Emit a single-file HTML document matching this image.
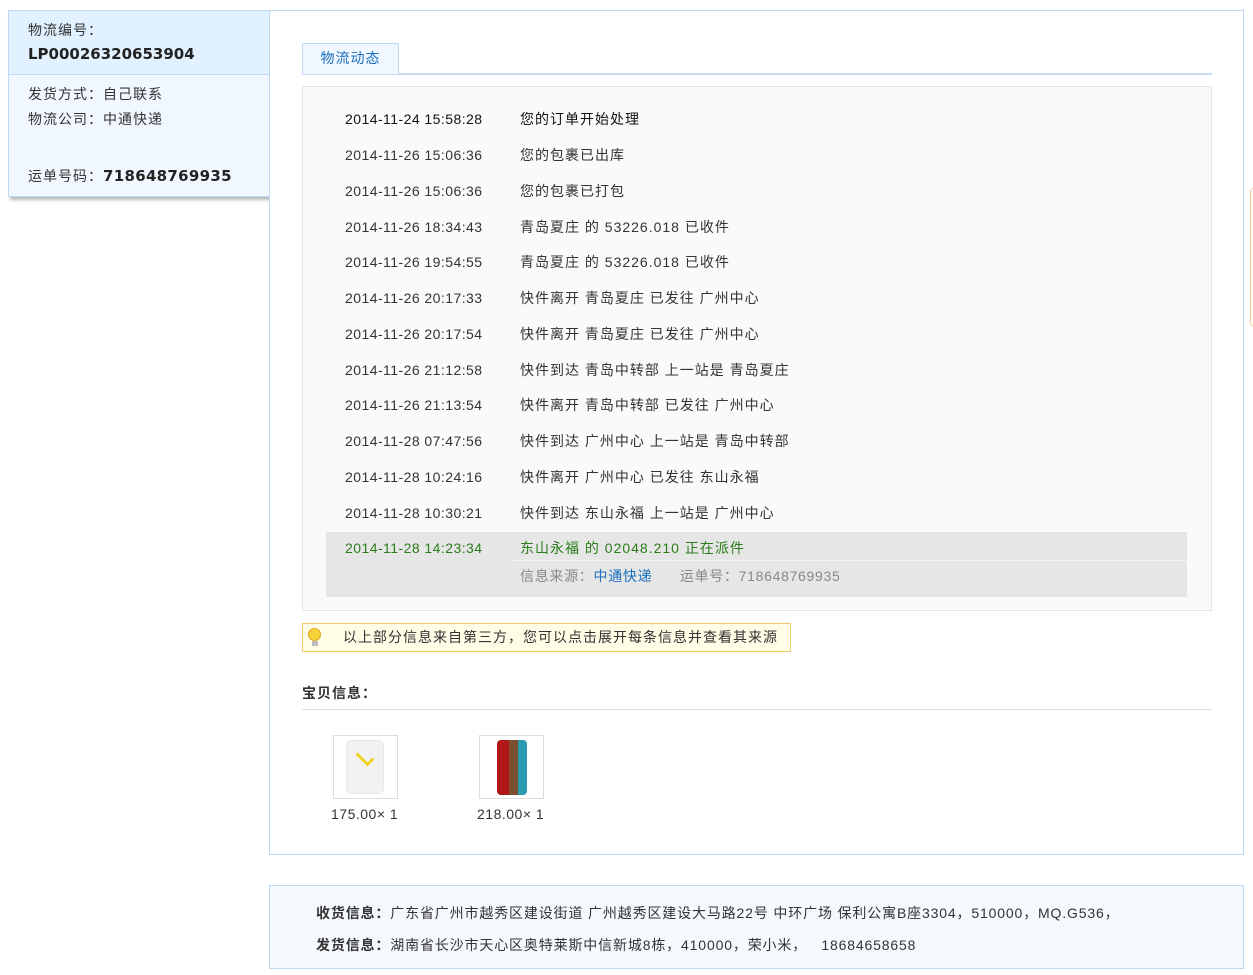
<!DOCTYPE html>
<html><head><meta charset="utf-8"><style>
*{margin:0;padding:0;box-sizing:border-box}
body{width:1253px;height:975px;background:#fff;font-family:"Liberation Sans","Noto Sans CJK SC",sans-serif;font-size:14px;color:#333;position:relative;overflow:hidden}
.a{position:absolute}
.left{left:8px;top:10px;width:262px;height:187px;border:1px solid #bcd8f5;background:#f1f7ff;box-shadow:2px 3px 3px #bbb}
.lh{height:64px;background:#e1f1ff;border-bottom:1px solid #bcd8f5}
.main{left:269px;top:10px;width:975px;height:845px;border:1px solid #bcd8f5;background:#fff}
.row{position:absolute;left:345px;height:20px;line-height:20px;color:#333;letter-spacing:0.45px}
.row span{position:absolute;left:175px;white-space:nowrap;letter-spacing:1px}
.bottom{left:269px;top:885px;width:975px;height:84px;border:1px solid #bcd8f5;background:#f5f9fd}
</style></head><body>
<div class="a left"><div class="lh"></div></div>
<div class="a" style="left:28px;top:20px;letter-spacing:1px">物流编号：</div>
<div class="a" style="left:28px;top:45px;font-weight:bold;font-size:15px;font-family:'DejaVu Sans',sans-serif;color:#222">LP00026320653904</div>
<div class="a" style="left:28px;top:84px;letter-spacing:1px">发货方式：自己联系</div>
<div class="a" style="left:28px;top:109px;letter-spacing:1px">物流公司：中通快递</div>
<div class="a" style="left:28px;top:166px;letter-spacing:1px">运单号码：<b style="font-family:'DejaVu Sans',sans-serif;font-size:15px;color:#222;letter-spacing:0.3px">718648769935</b></div>

<div class="a main"></div>
<div class="a" style="left:302px;top:73px;width:910px;height:2px;background:#c6dcf5"></div>
<div class="a" style="left:302px;top:43px;width:97px;height:31px;border:1px solid #bcd8f5;border-bottom:none;background:#f1f7ff;color:#1a6fbf;text-align:center;line-height:28px;border-radius:2px 2px 0 0;letter-spacing:1px">物流动态</div>
<div class="a" style="left:302px;top:86px;width:910px;height:525px;border:1px solid #e6e6e6;background:#fafafa"></div>
<div class="a" style="left:326px;top:532px;width:861px;height:65px;background:#e6e6e6"></div>
<div class="a" style="left:510px;top:560px;width:677px;height:1px;background:#f3f3f3"></div>

<div class="row" style="top:109px;color:#111">2014-11-24 15:58:28<span>您的订单开始处理</span></div>
<div class="row" style="top:145px">2014-11-26 15:06:36<span>您的包裹已出库</span></div>
<div class="row" style="top:181px">2014-11-26 15:06:36<span>您的包裹已打包</span></div>
<div class="row" style="top:217px">2014-11-26 18:34:43<span>青岛夏庄 的 53226.018 已收件</span></div>
<div class="row" style="top:252px">2014-11-26 19:54:55<span>青岛夏庄 的 53226.018 已收件</span></div>
<div class="row" style="top:288px">2014-11-26 20:17:33<span>快件离开 青岛夏庄 已发往 广州中心</span></div>
<div class="row" style="top:324px">2014-11-26 20:17:54<span>快件离开 青岛夏庄 已发往 广州中心</span></div>
<div class="row" style="top:360px">2014-11-26 21:12:58<span>快件到达 青岛中转部 上一站是 青岛夏庄</span></div>
<div class="row" style="top:395px">2014-11-26 21:13:54<span>快件离开 青岛中转部 已发往 广州中心</span></div>
<div class="row" style="top:431px">2014-11-28 07:47:56<span>快件到达 广州中心 上一站是 青岛中转部</span></div>
<div class="row" style="top:467px">2014-11-28 10:24:16<span>快件离开 广州中心 已发往 东山永福</span></div>
<div class="row" style="top:503px">2014-11-28 10:30:21<span>快件到达 东山永福 上一站是 广州中心</span></div>
<div class="row" style="top:538px;color:#2a7d1a">2014-11-28 14:23:34<span>东山永福 的 02048.210 正在派件</span></div>
<div class="row" style="top:566px;color:#888"><span style="letter-spacing:0.7px">信息来源：<b style="font-weight:normal;color:#1a6fbf">中通快递</b>&nbsp;&nbsp;&nbsp;&nbsp;&nbsp;&nbsp;运单号：718648769935</span></div>

<div class="a" style="left:302px;top:623px;width:489px;height:29px;border:1px solid #f5c76a;background:#fffde6;line-height:27px;padding-left:40px;letter-spacing:1px;white-space:nowrap">以上部分信息来自第三方，您可以点击展开每条信息并查看其来源</div>
<div class="a" style="left:308px;top:628px;width:13px;height:13px;border-radius:50%;background:#f7d23a;border:1px solid #e0a820"></div>
<div class="a" style="left:312px;top:641px;width:6px;height:5px;background:#bbb"></div>

<div class="a" style="left:302px;top:683px;font-weight:bold;color:#333;letter-spacing:1px">宝贝信息：</div>
<div class="a" style="left:302px;top:709px;width:910px;height:1px;background:#ddd"></div>

<div class="a" style="left:333px;top:735px;width:65px;height:64px;border:1px solid #ddd;background:#fff"></div>
<div class="a" style="left:346px;top:740px;width:38px;height:54px;border-radius:6px;background:#f2f2f2;border:1px solid #e6e6e6"></div>
<div class="a" style="left:353px;top:750px;width:24px;height:14px;border-bottom:4px solid #f0d020;border-right:4px solid #f0d020;transform:rotate(45deg) scale(.7);"></div>
<div class="a" style="left:479px;top:735px;width:65px;height:64px;border:1px solid #ddd;background:#fff"></div>
<div class="a" style="left:497px;top:740px;width:30px;height:55px;border-radius:4px;background:linear-gradient(90deg,#b01818 0 40%,#7a5030 40% 70%,#2a9ab0 70%)"></div>
<div class="a" style="left:331px;top:806px;letter-spacing:0.5px">175.00× 1</div>
<div class="a" style="left:477px;top:806px;letter-spacing:0.5px">218.00× 1</div>

<div class="a bottom"></div>
<div class="a" style="left:316px;top:903px;letter-spacing:0.85px;white-space:nowrap"><b>收货信息：</b>广东省广州市越秀区建设街道 广州越秀区建设大马路22号 中环广场 保利公寓B座3304，510000，MQ.G536，</div>
<div class="a" style="left:316px;top:935px;letter-spacing:0.85px;white-space:nowrap"><b>发货信息：</b>湖南省长沙市天心区奥特莱斯中信新城8栋，410000，荣小米，&nbsp;&nbsp;&nbsp;18684658658</div>

<div class="a" style="left:1250px;top:188px;width:6px;height:138px;border:1px solid #f5c79a;border-radius:3px;background:#fff"></div>
</body></html>
